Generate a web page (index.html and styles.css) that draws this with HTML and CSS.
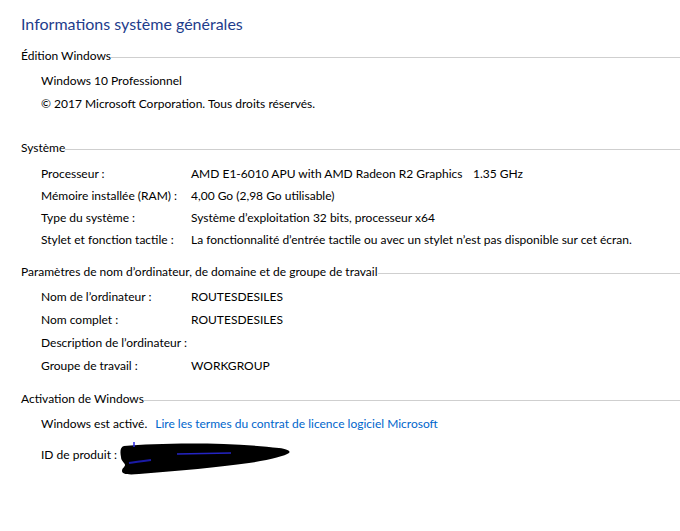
FILE: index.html
```html
<!DOCTYPE html>
<html lang="fr">
  <head>
    <meta charset="UTF-8" />
    <meta name="viewport" content="width=device-width, initial-scale=1.0" />
    <title>Système</title>
    <link rel="stylesheet" href="styles.css">
  </head>
  <body>
    <h1 class="title">Informations système générales</h1>

    <div class="section section-edition">
      <div class="section-header"><span>Édition Windows</span></div>
      <div class="row"><span class="plain">Windows 10 Professionnel</span></div>
      <div class="row"><span class="plain">© 2017 Microsoft Corporation. Tous droits réservés.</span></div>
    </div>

    <div class="section section-system">
      <div class="section-header"><span>Système</span></div>
      <div class="row">
        <span class="label">Processeur :</span>
        <span class="value"><span class="cpu">AMD E1-6010 APU with AMD Radeon R2 Graphics</span>1.35 GHz</span>
      </div>
      <div class="row">
        <span class="label">Mémoire installée (RAM) :</span>
        <span class="value">4,00 Go (2,98 Go utilisable)</span>
      </div>
      <div class="row">
        <span class="label">Type du système :</span>
        <span class="value">Système d’exploitation 32 bits, processeur x64</span>
      </div>
      <div class="row">
        <span class="label">Stylet et fonction tactile :</span>
        <span class="value">La fonctionnalité d’entrée tactile ou avec un stylet n’est pas disponible sur cet écran.</span>
      </div>
    </div>

    <div class="section">
      <div class="section-header"><span>Paramètres de nom d’ordinateur, de domaine et de groupe de travail</span></div>
      <div class="row">
        <span class="label">Nom de l’ordinateur :</span>
        <span class="value">ROUTESDESILES</span>
      </div>
      <div class="row">
        <span class="label">Nom complet :</span>
        <span class="value">ROUTESDESILES</span>
      </div>
      <div class="row">
        <span class="label">Description de l’ordinateur :</span>
        <span class="value"></span>
      </div>
      <div class="row">
        <span class="label">Groupe de travail :</span>
        <span class="value">WORKGROUP</span>
      </div>
    </div>

    <div class="section">
      <div class="section-header"><span>Activation de Windows</span></div>
      <div class="row">
        <span class="plain">Windows est activé.</span>
        <a class="link" href="#">Lire les termes du contrat de licence logiciel Microsoft</a>
      </div>
      <div class="row row-id">
        <span class="plain">ID de produit :</span>
        <!-- redacted product key -->
        <svg class="scribble" width="172" height="40" viewBox="0 0 172 40">
          <path d="M5,8 C40,5 110,4 160,10 C168,11 172,13 170,15 C166,18 150,22 130,25 C100,29 60,33 20,36 C8,37 3,36 3,33 C3,30 6,29 6,27 C6,25 2,23 2,19 C1,14 1,9 5,8 Z" fill="#000" />
          <path d="M58,16 C75,15.6 95,15.3 112,15" stroke="#2a2ae6" stroke-width="1.6" fill="none" opacity="0.85" />
          <path d="M10,25 C16,24 24,23 32,22" stroke="#2020d0" stroke-width="2" fill="none" opacity="0.8" />
          <path d="M15,4 L15,9" stroke="#2a2ae6" stroke-width="1.5" />
        </svg>
      </div>
    </div>
  </body>
</html>
```

FILE: styles.css
```css
body {
  margin: 0;
  padding: 12px 0 0 21px;
  background: #fff;
  color: #000;
  font-family: "Segoe UI", Lato, "Liberation Sans", sans-serif;
  font-size: 12px;
}
.title {
  margin: 0 0 7px;
  height: 24px;
  line-height: 24px;
  font-size: 16px;
  font-weight: normal;
  color: #1e3c8c;
}
.section {
  margin-bottom: 9px;
}
.section-edition {
  margin-bottom: 20px;
}
.section-header {
  display: flex;
  align-items: center;
  height: 26px;
  line-height: 26px;
}
.section-header::after {
  content: "";
  flex: 1;
  border-top: 1px solid #cfcfcf;
  margin-top: 2px;
}
.row {
  display: flex;
  align-items: center;
  height: 23px;
  padding-left: 20px;
  white-space: nowrap;
}
.section-system .row {
  height: 22px;
}
.section-system .section-header + .row {
  margin-top: 1px;
}
.label {
  width: 150px;
}
.cpu {
  display: inline-block;
  width: 282px;
}
.link {
  margin-left: 8px;
  color: #0066cc;
  text-decoration: none;
}
.row-id {
  height: 30px;
  margin-top: 4px;
}
.scribble {
  flex: none;
  margin-left: 2px;
  margin-top: 8px;
}
```
